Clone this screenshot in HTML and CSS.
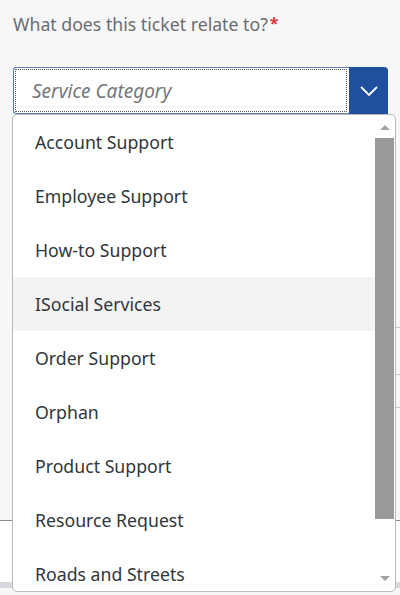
FILE: index.html
```html
<!DOCTYPE html>
<html>
<head>
<meta charset="utf-8">
<link rel="stylesheet" href="styles.css">
</head>
<body>
<div class="page">
  <div class="label">What does this ticket relate to?<span class="req">*</span></div>
  <div class="combo">
    <div class="input"><span class="placeholder">Service Category</span></div>
    <div class="btn">
      <svg width="18" height="10" viewBox="0 0 18 10"><path d="M1 1 L9 9 L17 1" fill="none" stroke="#fff" stroke-width="1.8"/></svg>
    </div>
  </div>
  <div class="behind">
    <div class="brow r1"></div>
    <div class="brow r2"></div>
    <div class="brow r3"></div>
    <div class="brow r4"></div>
    <div class="brow r5"></div>
  </div>
  <div class="popover">
    <ul class="list">
      <li>Account Support</li>
      <li>Employee Support</li>
      <li>How-to Support</li>
      <li class="hover">ISocial Services</li>
      <li>Order Support</li>
      <li>Orphan</li>
      <li>Product Support</li>
      <li>Resource Request</li>
      <li>Roads and Streets</li>
    </ul>
    <div class="scroll">
      <div class="arrow up"></div>
      <div class="thumb"></div>
      <div class="arrow down"></div>
    </div>
  </div>
</div>
</body>
</html>
```

FILE: styles.css
```css
html, body {
  margin: 0;
  padding: 0;
  background: #f7f7f7;
  font-family: "Noto Sans", "Open Sans", Arial, sans-serif;
}
.page {
  position: relative;
  width: 400px;
  height: 595px;
  overflow: hidden;
}
.label {
  padding: 11px 0 0 13px;
  height: 67px;
  box-sizing: border-box;
  font-size: 17.7px;
  color: #6a6d70;
  line-height: 24px;
}
.req {
  color: #d9363e;
  margin-left: 2px;
  font-weight: bold;
  font-size: 16px;
  vertical-align: 2px;
}
.combo {
  display: flex;
  margin-left: 13px;
  width: 375px;
  height: 47px;
}
.input {
  flex: 1;
  background: #fff;
  border: 1px solid #5b7fb8;
  border-right: none;
  border-radius: 3px 0 0 3px;
  outline: 1px dotted #555;
  outline-offset: -3px;
  display: flex;
  align-items: center;
  padding-left: 18px;
}
.placeholder {
  font-style: italic;
  color: #74777a;
  font-size: 19px;
}
.btn {
  width: 39px;
  background: #1f50a0;
  border-radius: 0 4px 0 0;
  display: flex;
  align-items: center;
  justify-content: center;
}
.behind {
  display: flex;
  flex-direction: column;
}
.brow {
  border-bottom: 1px solid #c8c8c8;
}
.r1, .r2, .r3 { margin-left: 390px; }
.r1 { height: 213px; }
.r2 { height: 46px; }
.r3 { height: 32px; }
.r4 { height: 112px; border-bottom-color: #8a8a8a; }
.r5 { height: 61px; background: #fff; border-bottom: 6px solid #d5d9de; }
.popover {
  position: absolute;
  left: 12px;
  top: 114px;
  width: 384px;
  height: 478px;
  box-sizing: border-box;
  background: #fff;
  border: 1px solid #b9b9b9;
  border-radius: 5px;
  display: flex;
  overflow: hidden;
}
.list {
  list-style: none;
  margin: 0;
  padding: 0;
  flex: 1;
}
.list li {
  height: 54px;
  line-height: 54px;
  padding-left: 22px;
  font-size: 17.7px;
  color: #32363a;
}
.list li.hover {
  background: #f3f3f3;
}
.scroll {
  width: 19px;
  display: flex;
  flex-direction: column;
  align-items: center;
  margin-right: 1px;
}
.arrow {
  width: 0;
  height: 0;
  border-left: 5px solid transparent;
  border-right: 5px solid transparent;
}
.arrow.up {
  border-bottom: 5px solid #a3a3a3;
  margin: 10px 0 8px;
}
.arrow.down {
  border-top: 5px solid #a3a3a3;
  margin: 57px 0 0;
}
.thumb {
  width: 19px;
  height: 381px;
  background: #999;
}
```
